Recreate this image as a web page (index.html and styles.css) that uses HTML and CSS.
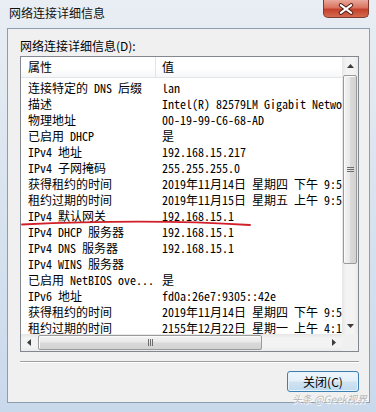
FILE: index.html
```html
<!DOCTYPE html>
<html lang="zh-CN">
<head>
  <meta charset="UTF-8" />
  <title>网络连接详细信息</title>
  <link rel="stylesheet" href="styles.css">
</head>
<body>
  <div class="window">
    <div class="titlebar">
      <span class="title">网络连接详细信息</span>
      <button class="close" aria-label="关闭">
        <svg width="46" height="18" viewBox="0 0 46 18">
          <path d="M17.5 5 L28.5 13 M28.5 5 L17.5 13" stroke="#4a1a12" stroke-width="4.2" stroke-linecap="round" fill="none"/>
          <path d="M17.5 5 L28.5 13 M28.5 5 L17.5 13" stroke="#fff" stroke-width="2.2" stroke-linecap="round" fill="none"/>
        </svg>
      </button>
    </div>

    <div class="client">
      <div class="label">网络连接详细信息(D):</div>

      <div class="listview">
        <div class="list-main">
          <div class="list-body">
            <div class="list-header">
              <div class="col-prop">属性</div>
              <div class="col-val">值</div>
            </div>
            <div class="rows">
              <div class="row"><div class="col-prop">连接特定的 DNS 后缀</div><div class="col-val">lan</div></div>
              <div class="row"><div class="col-prop">描述</div><div class="col-val">Intel(R) 82579LM Gigabit Netwo</div></div>
              <div class="row"><div class="col-prop">物理地址</div><div class="col-val">00-19-99-C6-68-AD</div></div>
              <div class="row"><div class="col-prop">已启用 DHCP</div><div class="col-val">是</div></div>
              <div class="row"><div class="col-prop">IPv4 地址</div><div class="col-val">192.168.15.217</div></div>
              <div class="row"><div class="col-prop">IPv4 子网掩码</div><div class="col-val">255.255.255.0</div></div>
              <div class="row"><div class="col-prop">获得租约的时间</div><div class="col-val">2019年11月14日 星期四 下午 9:5</div></div>
              <div class="row"><div class="col-prop">租约过期的时间</div><div class="col-val">2019年11月15日 星期五 上午 9:5</div></div>
              <div class="row"><div class="col-prop">IPv4 默认网关</div><div class="col-val">192.168.15.1</div></div>
              <div class="row"><div class="col-prop">IPv4 DHCP 服务器</div><div class="col-val">192.168.15.1</div></div>
              <div class="row"><div class="col-prop">IPv4 DNS 服务器</div><div class="col-val">192.168.15.1</div></div>
              <div class="row"><div class="col-prop">IPv4 WINS 服务器</div><div class="col-val"></div></div>
              <div class="row"><div class="col-prop">已启用 NetBIOS ove...</div><div class="col-val">是</div></div>
              <div class="row"><div class="col-prop">IPv6 地址</div><div class="col-val">fd0a:26e7:9305::42e</div></div>
              <div class="row"><div class="col-prop">获得租约的时间</div><div class="col-val">2019年11月14日 星期四 下午 9:5</div></div>
              <div class="row"><div class="col-prop">租约过期的时间</div><div class="col-val">2155年12月22日 星期一 上午 4:1</div></div>
            </div>
          </div>

          <div class="vscroll">
            <div class="sb-btn">
              <svg width="7" height="4" viewBox="0 0 7 4"><polygon points="0,4 7,4 3.5,0" fill="#3c3c3c"/></svg>
            </div>
            <div class="vtrack">
              <div class="vthumb">
                <svg width="7" height="7" viewBox="0 0 7 7">
                  <path d="M0 1.5 H7 M0 3.5 H7 M0 5.5 H7" stroke="#6d6d6d" stroke-width="1"/>
                </svg>
              </div>
            </div>
            <div class="sb-btn">
              <svg width="7" height="4" viewBox="0 0 7 4"><polygon points="0,0 7,0 3.5,4" fill="#3c3c3c"/></svg>
            </div>
          </div>
        </div>

        <div class="hscroll-row">
          <div class="hscroll">
            <div class="sb-btn">
              <svg width="4" height="7" viewBox="0 0 4 7"><polygon points="4,0 4,7 0,3.5" fill="#3c3c3c"/></svg>
            </div>
            <div class="htrack">
              <div class="hthumb">
                <svg width="7" height="7" viewBox="0 0 7 7">
                  <path d="M1.5 0 V7 M3.5 0 V7 M5.5 0 V7" stroke="#6d6d6d" stroke-width="1"/>
                </svg>
              </div>
            </div>
            <div class="sb-btn">
              <svg width="4" height="7" viewBox="0 0 4 7"><polygon points="0,0 0,7 4,3.5" fill="#3c3c3c"/></svg>
            </div>
          </div>
          <div class="corner"></div>
        </div>
      </div>

      <div class="separator"></div>

      <div class="actions">
        <button class="btn">关闭(C)</button>
      </div>
    </div>

    <!-- red hand-drawn mark under the gateway row -->
    <svg class="markup" width="376" height="412" viewBox="0 0 376 412">
      <path d="M22 224.5 Q 150 218.5 250 225" stroke="#d11f2a" stroke-width="1.8" fill="none" stroke-linecap="round"/>
    </svg>

    <div class="watermark">头条 @Geek视界</div>
  </div>
</body>
</html>
```

FILE: styles.css
```css
* {
  margin: 0;
  padding: 0;
  box-sizing: border-box;
}

body {
  width: 376px;
  height: 412px;
  overflow: hidden;
  font-family: "Noto Sans CJK SC", sans-serif;
  font-size: 12px;
  color: #000;
}

.window {
  position: relative;
  width: 376px;
  height: 412px;
  display: flex;
  flex-direction: column;
  background: linear-gradient(180deg, #e9eef4 0%, #dde6f0 35%, #c9d9ec 100%);
}

.titlebar {
  height: 28px;
  display: flex;
  align-items: flex-start;
  padding-left: 9px;
}

.title {
  padding-top: 5px;
  line-height: 16px;
  color: #111;
}

.close {
  margin-left: auto;
  margin-right: 7px;
  width: 46px;
  height: 18px;
  border: 1px solid #7c3a30;
  border-top: none;
  border-radius: 0 0 5px 5px;
  background: linear-gradient(180deg, #e9a89b 0%, #d9735f 45%, #c5412c 55%, #d36a4f 100%);
  display: flex;
  align-items: center;
  justify-content: center;
}

.close svg {
  display: block;
}

.client {
  flex: 1;
  margin: 0 6px 9px 7px;
  border: 1px solid #8d9db0;
  background: #f0f0f0;
  padding: 10px 10px 0 12px;
  display: flex;
  flex-direction: column;
}

.label {
  line-height: 14px;
  height: 14px;
  margin-bottom: 3px;
}

.listview {
  height: 296px;
  border: 1px solid #828790;
  background: #fff;
  display: flex;
  flex-direction: column;
}

.list-main {
  height: 277px;
  display: flex;
}

.list-body {
  flex: 1;
  overflow: hidden;
  font-family: "Noto Sans Mono CJK SC", "Liberation Mono", "Noto Sans CJK SC", monospace;
  white-space: nowrap;
}

.list-header {
  height: 21px;
  display: grid;
  grid-template-columns: 135px 1fr;
  line-height: 20px;
  border-bottom: 1px solid #e2e4e7;
  background: linear-gradient(180deg, #fff 0%, #fff 55%, #f6f7f9 100%);
  font-family: "Noto Sans CJK SC", sans-serif;
}

.list-header .col-prop {
  border-right: 1px solid #e2e4e7;
}

.rows {
  padding-top: 2px;
}

.row {
  height: 16px;
  line-height: 16px;
  display: grid;
  grid-template-columns: 135px 1fr;
}

.col-prop {
  padding-left: 7px;
  overflow: hidden;
}

.col-val {
  padding-left: 6px;
}

.vscroll {
  width: 16px;
  display: flex;
  flex-direction: column;
  background: linear-gradient(90deg, #e6e6e6 0%, #f3f3f3 25%, #f3f3f3 75%, #e9e9e9 100%);
}

.sb-btn {
  width: 16px;
  height: 17px;
  display: flex;
  align-items: center;
  justify-content: center;
  flex-shrink: 0;
}

.sb-btn svg {
  display: block;
}

.vtrack {
  flex: 1;
  display: flex;
  flex-direction: column;
  padding: 1px 1px 0;
}

.vthumb {
  height: 189px;
  border: 1px solid #9a9a9a;
  border-radius: 2px;
  background: linear-gradient(90deg, #f4f4f4 0%, #e9e9e9 45%, #d9d9d9 55%, #d2d2d2 100%);
  box-shadow: inset 1px 1px 0 #fbfbfb;
  display: flex;
  align-items: center;
  justify-content: center;
}

.hscroll-row {
  height: 17px;
  display: flex;
}

.hscroll {
  flex: 1;
  display: flex;
  background: linear-gradient(180deg, #e6e6e6 0%, #f3f3f3 25%, #f3f3f3 75%, #e9e9e9 100%);
}

.htrack {
  flex: 1;
  display: flex;
  align-items: stretch;
  padding: 1px 0 1px 1px;
}

.hthumb {
  width: 224px;
  border: 1px solid #9a9a9a;
  border-radius: 2px;
  background: linear-gradient(180deg, #f4f4f4 0%, #e9e9e9 45%, #d9d9d9 55%, #d2d2d2 100%);
  box-shadow: inset 1px 1px 0 #fbfbfb;
  display: flex;
  align-items: center;
  justify-content: center;
}

.corner {
  width: 16px;
  background: #f0f0f0;
}

.separator {
  margin-top: 9px;
  height: 2px;
  border-top: 1px solid #a0a0a0;
  border-bottom: 1px solid #fff;
}

.actions {
  margin-top: 8px;
  display: flex;
  justify-content: flex-end;
}

.btn {
  width: 72px;
  height: 21px;
  border: 1px solid #3c7fb1;
  border-radius: 3px;
  background: linear-gradient(180deg, #f0f7fc 0%, #e3eff8 48%, #cfe3f2 52%, #c2daee 100%);
  box-shadow: inset 0 0 0 1px #e6f3fc;
  font-family: "Noto Sans CJK SC", sans-serif;
  font-size: 12px;
  line-height: 18px;
  color: #000;
}

.markup {
  position: absolute;
  left: 0;
  top: 0;
  pointer-events: none;
}

.watermark {
  position: absolute;
  right: 9px;
  bottom: 7px;
  font-size: 10px;
  line-height: 12px;
  color: #b4b4b4;
  font-style: italic;
  text-shadow: 0 0 1px #fff, 1px 1px 0 #fff;
}
```
